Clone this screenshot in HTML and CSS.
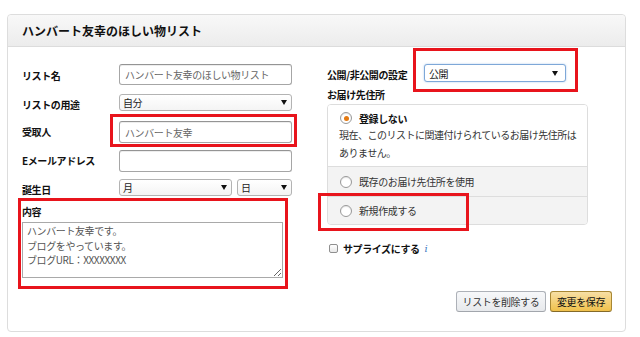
FILE: index.html
```html
<!DOCTYPE html>
<html lang="ja">
<head>
<meta charset="utf-8">
<link rel="stylesheet" href="styles.css">
</head>
<body>
<div class="card">
  <div class="card-head"><h1 class="title">ハンバート友幸のほしい物リスト</h1></div>
  <div class="card-body">
    <div class="col-left">
      <div class="row r1">
        <label class="lbl">リスト名</label>
        <input class="txt" type="text" value="ハンバート友幸のほしい物リスト" readonly>
      </div>
      <div class="row r2">
        <label class="lbl">リストの用途</label>
        <div class="sel w-full"><span>自分</span><span class="arr"></span></div>
      </div>
      <div class="row r3">
        <label class="lbl">受取人</label>
        <input class="txt" type="text" value="ハンバート友幸" readonly>
      </div>
      <div class="row r4">
        <label class="lbl">Eメールアドレス</label>
        <input class="txt" type="text" value="" readonly>
      </div>
      <div class="row r5">
        <label class="lbl">誕生日</label>
        <div class="pair">
          <div class="sel w-month"><span>月</span><span class="arr"></span></div>
          <div class="sel w-day"><span>日</span><span class="arr"></span></div>
        </div>
      </div>
      <div class="memo">
        <label class="lbl memo-lbl">内容</label>
        <textarea class="area" readonly>ハンバート友幸です。
ブログをやっています。
ブログURL：XXXXXXXX</textarea>
      </div>
    </div>
    <div class="col-right">
      <div class="row r1r">
        <label class="lbl">公開/非公開の設定</label>
        <div class="sel sel-focus w-pub"><span>公開</span><span class="arr"></span></div>
      </div>
      <div class="lbl addr-lbl">お届け先住所</div>
      <div class="panel">
        <div class="sec sec-1">
          <div class="radio-row"><span class="radio on"></span><span class="rlabel bold">登録しない</span></div>
          <p class="note">現在、このリストに関連付けられているお届け先住所は<br>ありません。</p>
        </div>
        <div class="sec sec-2">
          <div class="radio-row"><span class="radio"></span><span class="rlabel">既存のお届け先住所を使用</span></div>
        </div>
        <div class="sec sec-3">
          <div class="radio-row"><span class="radio"></span><span class="rlabel">新規作成する</span></div>
        </div>
      </div>
      <div class="check-row">
        <span class="check"></span><span class="clabel">サプライズにする</span><span class="info">i</span>
      </div>
      <div class="btns">
        <button class="btn btn-gray">リストを削除する</button>
        <button class="btn btn-gold">変更を保存</button>
      </div>
    </div>
  </div>
</div>
<div class="mark mark-pub"></div>
<div class="mark mark-recv"></div>
<div class="mark mark-memo"></div>
<div class="mark mark-new"></div>
</body>
</html>
```

FILE: styles.css
```css
* { box-sizing: border-box; }
html, body { margin: 0; padding: 0; background: #fff; }
body {
  font-family: "Noto Sans CJK JP", "Noto Sans", sans-serif;
  color: #111;
  font-size: 10px;
  letter-spacing: -0.4px;
  position: relative;
  width: 640px;
  height: 337px;
  overflow: hidden;
}
.card {
  margin: 14px 0 0 7px;
  width: 619px;
  border: 1px solid #ddd;
  border-radius: 4px;
  background: #fff;
}
.card-head {
  height: 32px;
  background: linear-gradient(#f8f8f8, #ececec);
  border-bottom: 1px solid #dcdcdc;
  border-radius: 4px 4px 0 0;
  display: flex;
  align-items: center;
  padding-left: 14px;
}
.title {
  margin: 0;
  font-size: 12px;
  font-weight: bold;
  letter-spacing: 0;
  line-height: 1;
  padding-top: 1px;
}
.card-body {
  display: flex;
  padding: 17px 13px 19px 14px;
  gap: 35px;
}
.col-left { width: 270px; display: flex; flex-direction: column; }
.col-right { width: 285px; display: flex; flex-direction: column; }
.row { display: flex; align-items: center; }
.lbl { font-weight: bold; width: 97px; flex: none; line-height: 14px; }
.r1 { height: 21px; margin-bottom: 9px; }
.r2 { height: 17px; margin-bottom: 10px; }
.r3 { height: 22px; margin-bottom: 7px; }
.r4 { height: 22px; margin-bottom: 7px; }
.r5 { height: 17px; }
.r2 .lbl, .r5 .lbl { padding-top: 4px; }
.r1 .lbl { padding-top: 3px; }
.txt {
  width: 173px;
  height: 100%;
  border: 1px solid #a6a6a6;
  border-top-color: #949494;
  border-radius: 3px;
  box-shadow: inset 0 1px 0 rgba(0,0,0,0.07);
  padding: 0 0 0 5px;
  font-family: inherit;
  font-size: 10px;
  letter-spacing: -0.4px;
  color: #666;
  outline: none;
  background: #fff;
}
.sel {
  height: 100%;
  border: 1px solid #b3b3b3;
  border-radius: 3px;
  background: linear-gradient(#fff, #f4f4f4);
  display: flex;
  align-items: center;
  justify-content: space-between;
  padding: 0 4px 0 3px;
  color: #222;
}
.arr {
  width: 0; height: 0;
  border-left: 3px solid transparent;
  border-right: 3px solid transparent;
  border-top: 5px solid #111;
}
.w-full { width: 173px; }
.pair { display: flex; gap: 5px; height: 100%; }
.w-month { width: 113px; }
.w-day { width: 55px; }
.memo { margin-top: 9px; display: flex; flex-direction: column; }
.memo-lbl { height: 14px; margin-bottom: 3px; }
.area {
  width: 261px;
  height: 56px;
  border: 1px solid #a9a9a9;
  border-radius: 0;
  font-family: inherit;
  font-size: 10px;
  letter-spacing: -0.4px;
  line-height: 14.5px;
  color: #555;
  padding: 1px 4px;
  resize: both;
  outline: none;
}
.r1r { height: 18px; }
.r1r .lbl { padding-top: 4px; }
.w-pub { width: 142px; padding-left: 4px; padding-right: 7px; }
.sel-focus {
  border-color: #7ea8d8;
  box-shadow: 0 0 2px rgba(90,150,220,0.5);
  background: #fff;
}
.addr-lbl { margin-top: 6px; height: 14px; margin-bottom: 2px; width: auto; }
.panel {
  width: 261px;
  border: 1px solid #ddd;
  border-radius: 4px;
  overflow: hidden;
}
.sec-1 { padding: 6px 8px 4px 11px; background: #fff; }
.sec-2 { height: 30px; background: #f3f3f3; border-top: 1px solid #ddd; padding: 0 10px 0 11px; display: flex; align-items: center; }
.sec-3 { height: 28px; background: #f3f3f3; border-top: 1px solid #ddd; padding: 0 10px 0 11px; display: flex; align-items: center; }
.radio-row { display: flex; align-items: center; height: 14px; }
.radio {
  width: 12px; height: 12px;
  border: 1px solid #999;
  border-radius: 50%;
  background: #fff;
  margin-left: 1px;
  margin-right: 7px;
  display: flex; align-items: center; justify-content: center;
  box-shadow: inset 0 1px 1px rgba(0,0,0,0.1);
}
.radio.on::after {
  content: "";
  width: 5px; height: 5px;
  border-radius: 50%;
  background: #e47911;
}
.rlabel { color: #333; }
.bold { font-weight: bold; color: #111; }
.note { margin: 1px 0 0 0; line-height: 18px; color: #333; white-space: nowrap; letter-spacing: -0.5px; }
.check-row { margin-top: 17px; height: 12px; display: flex; align-items: center; }
.check {
  width: 9px; height: 9px;
  border: 1px solid #8f8f8f;
  border-radius: 2px;
  background: linear-gradient(#fff, #e8e8e8);
  margin-left: 2px;
  margin-right: 5px;
}
.clabel { font-weight: bold; }
.info {
  margin-left: 5px;
  color: #3b7bbf;
  font-family: "DejaVu Serif", serif;
  font-style: italic;
  font-size: 10px;
}
.btns { display: flex; justify-content: flex-end; gap: 4px; margin-top: 37px; }
.btn {
  height: 21px;
  border-radius: 3px;
  font-family: inherit;
  font-size: 10px;
  letter-spacing: -0.4px;
  color: #111;
  padding: 0;
  display: flex; align-items: center; justify-content: center;
}
.btn-gray {
  width: 90px;
  background: linear-gradient(#f7f8fa, #e7e9ec);
  border: 1px solid #adb1b8;
  border-bottom-color: #a2a6ac;
  color: #333;
}
.btn-gold {
  width: 62px;
  background: linear-gradient(#f7dfa5, #f0c14b);
  border: 1px solid #a88734;
  border-bottom-color: #846a29;
}
.mark {
  position: absolute;
  border: 3px solid #e8141c;
}
.mark-pub { left: 413px; top: 48px; width: 165px; height: 44px; }
.mark-recv { left: 110px; top: 114px; width: 187px; height: 33px; }
.mark-memo { left: 18px; top: 198px; width: 270px; height: 91px; }
.mark-new { left: 318px; top: 193px; width: 151px; height: 38px; }
```
